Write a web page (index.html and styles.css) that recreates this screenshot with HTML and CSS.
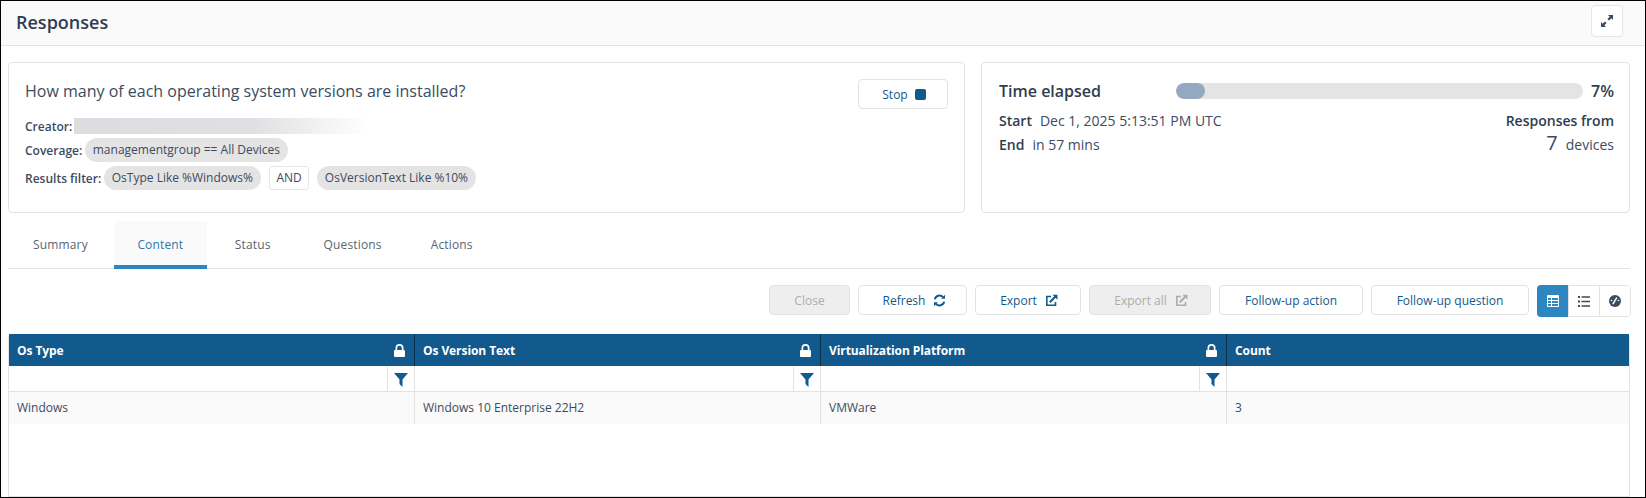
FILE: index.html
```html
<!DOCTYPE html>
<html lang="en">
<head>
<meta charset="utf-8">
<title>Responses</title>
<link rel="stylesheet" href="styles.css">
</head>
<body>
<div class="page">
  <header class="topbar">
    <h1 class="title">Responses</h1>
    <button class="icon-btn" aria-label="Expand">
      <svg width="12" height="12" viewBox="0 0 12 12" fill="#3d4b5f"><path d="M7 0h5v5l-1.700-1.700L8 5.600 6.400 4 8.700 1.700zM0 12V7l1.700 1.700L4 6.400 5.600 8 3.300 10.300 5 12z"/></svg>
    </button>
  </header>

  <section class="cards">
    <div class="card card-query">
      <div class="query-main">
        <div class="question">How many of each operating system versions are installed?</div>
        <div class="meta meta-creator"><span class="meta-label">Creator:</span><span class="redacted"></span></div>
        <div class="meta meta-coverage"><span class="meta-label">Coverage:</span><span class="chip">managementgroup == All Devices</span></div>
        <div class="meta"><span class="meta-label">Results filter:</span><span class="chip">OsType Like %Windows%</span><span class="op">AND</span><span class="chip">OsVersionText Like %10%</span></div>
      </div>
      <button class="btn btn-stop">Stop <span class="stop-square"></span></button>
    </div>
    <div class="card card-time">
      <div class="time-head">
        <span class="time-title">Time elapsed</span>
        <div class="bar"><div class="bar-fill"></div></div>
        <span class="pct">7%</span>
      </div>
      <div class="time-row">
        <div><b class="strong">Start</b>Dec 1, 2025 5:13:51 PM UTC</div>
        <div class="strong">Responses from</div>
      </div>
      <div class="time-row time-row-end">
        <div><b class="strong">End</b>in 57 mins</div>
        <div><span class="big-num">7</span>devices</div>
      </div>
    </div>
  </section>

  <nav class="tabs">
    <a class="tab tab-first">Summary</a>
    <a class="tab tab-active">Content</a>
    <a class="tab tab-status">Status</a>
    <a class="tab tab-questions">Questions</a>
    <a class="tab">Actions</a>
  </nav>

  <div class="toolbar">
    <button class="btn btn-disabled w-close">Close</button>
    <button class="btn w-refresh">Refresh
      <svg class="btn-icon" width="13" height="13" viewBox="0 0 13 13" fill="none" stroke="#12598d" stroke-width="2"><path d="M1.800 5.200A4.800 4.800 0 0 1 10 3.200"/><path d="M11.200 7.800A4.800 4.800 0 0 1 3 9.800"/><path d="M12 .8v4H8z" fill="#12598d" stroke="none"/><path d="M1 12.200v-4h4z" fill="#12598d" stroke="none"/></svg>
    </button>
    <button class="btn w-export">Export
      <svg class="btn-icon" width="13" height="13" viewBox="0 0 13 13" fill="none" stroke="#12598d" stroke-width="1.600"><path d="M6 2.500H1.800v8.700h8.700V8"/><path d="M4.800 8.200L10.500 2.500" stroke-width="2"/><path d="M7.500 .8h5v5z" fill="#12598d" stroke="none"/></svg>
    </button>
    <button class="btn btn-disabled w-exportall">Export all
      <svg class="btn-icon" width="13" height="13" viewBox="0 0 13 13" fill="none" stroke="#adadad" stroke-width="1.600"><path d="M6 2.500H1.800v8.700h8.700V8"/><path d="M4.800 8.200L10.500 2.500" stroke-width="2"/><path d="M7.500 .8h5v5z" fill="#adadad" stroke="none"/></svg>
    </button>
    <button class="btn w-action">Follow-up action</button>
    <button class="btn w-question">Follow-up question</button>
    <div class="view-group">
      <button class="view-btn view-active" aria-label="Table view">
        <svg width="12" height="12" viewBox="0 0 12 12" fill="#fff"><path fill-rule="evenodd" d="M.8 0h10.400a.8.800 0 0 1 .8.800v10.400a.8.800 0 0 1-.8.800H.8a.8.800 0 0 1-.8-.8V.8A.8.800 0 0 1 .8 0zM1 3v2h3V3zm4 0v2h6V3zM1 6v2h3V6zm4 0v2h6V6zM1 9v2h3V9zm4 0v2h6V9z"/></svg>
      </button>
      <button class="view-btn" aria-label="List view">
        <svg width="12" height="11" viewBox="0 0 12 11" fill="#3d4b5f"><path d="M0 0h2v2H0zM3.500 .2H12v1.600H3.500zM0 4.500h2v2H0zM3.500 4.700H12v1.600H3.500zM0 9h2v2H0zM3.500 9.200H12v1.600H3.500z"/></svg>
      </button>
      <button class="view-btn" aria-label="Dashboard view">
        <svg width="12" height="12" viewBox="0 0 12 12"><circle cx="6" cy="6" r="6" fill="#3d4b5f"/><path d="M3.800 9.200L7.800 2.600" stroke="#fff" stroke-width="1.500"/><circle cx="2.500" cy="5.500" r=".8" fill="#fff"/><circle cx="9.500" cy="5.500" r=".8" fill="#fff"/></svg>
      </button>
    </div>
  </div>

  <section class="grid-wrap">
    <div class="grid">
      <div class="th"><span>Os Type</span><svg class="lock" width="11" height="13" viewBox="0 0 11 13" fill="#fff"><path d="M1.500 6V4a4 4 0 0 1 8 0v2h.5a1 1 0 0 1 1 1v5a1 1 0 0 1-1 1H1a1 1 0 0 1-1-1V7a1 1 0 0 1 1-1zM3.200 6h4.600V4a2.300 2.300 0 0 0-4.600 0z"/></svg></div>
      <div class="th"><span>Os Version Text</span><svg class="lock" width="11" height="13" viewBox="0 0 11 13" fill="#fff"><path d="M1.500 6V4a4 4 0 0 1 8 0v2h.5a1 1 0 0 1 1 1v5a1 1 0 0 1-1 1H1a1 1 0 0 1-1-1V7a1 1 0 0 1 1-1zM3.200 6h4.600V4a2.300 2.300 0 0 0-4.600 0z"/></svg></div>
      <div class="th"><span>Virtualization Platform</span><svg class="lock" width="11" height="13" viewBox="0 0 11 13" fill="#fff"><path d="M1.500 6V4a4 4 0 0 1 8 0v2h.5a1 1 0 0 1 1 1v5a1 1 0 0 1-1 1H1a1 1 0 0 1-1-1V7a1 1 0 0 1 1-1zM3.200 6h4.600V4a2.300 2.300 0 0 0-4.600 0z"/></svg></div>
      <div class="th th-last"><span>Count</span></div>

      <div class="fc"><span class="fc-btn"><svg width="14" height="14" viewBox="0 0 14 14" fill="#12598d"><path d="M0 0h14L8.500 6.500V14L5.500 11V6.500z"/></svg></span></div>
      <div class="fc"><span class="fc-btn"><svg width="14" height="14" viewBox="0 0 14 14" fill="#12598d"><path d="M0 0h14L8.500 6.500V14L5.500 11V6.500z"/></svg></span></div>
      <div class="fc"><span class="fc-btn"><svg width="14" height="14" viewBox="0 0 14 14" fill="#12598d"><path d="M0 0h14L8.500 6.500V14L5.500 11V6.500z"/></svg></span></div>
      <div class="fc fc-last"></div>

      <div class="td">Windows</div>
      <div class="td">Windows 10 Enterprise 22H2</div>
      <div class="td">VMWare</div>
      <div class="td td-last">3</div>
    </div>
  </section>
</div>
</body>
</html>
```
FILE: styles.css
```css
* { box-sizing: border-box; }
html, body { margin: 0; padding: 0; background: #fff; }
body { font-family: "Open Sans", "Noto Sans", sans-serif; color: #3d4b5f; font-size: 12px; }
button { font-family: inherit; }

.page {
  width: 1646px; height: 498px; border: 1px solid #000; overflow: hidden;
  display: flex; flex-direction: column; background: #fff;
}

.topbar {
  height: 45px; flex: none; background: #fafafa; border-bottom: 1px solid #e3e3e3;
  display: flex; align-items: flex-start; justify-content: space-between;
  padding: 4px 22px 0 15px;
}
.title { margin: 4px 0 0; font-size: 18px; line-height: 26px; font-weight: 600; color: #2f3d50; }
.icon-btn {
  width: 32px; height: 32px; padding: 0; background: #fff; border: 1px solid #e6e6e6; border-radius: 4px;
  display: flex; align-items: center; justify-content: center;
}

.cards {
  display: flex; gap: 16px; padding: 16px 15px 0 7px; flex: none;
}
.card { height: 151px; background: #fff; border: 1px solid #e3e3e3; border-radius: 4px; }
.card-query { width: 957px; display: flex; justify-content: space-between; padding: 16px 16px 0 16px; }
.card-time { flex: 1; padding: 16px 15px 0 17px; }

.question { font-size: 16px; line-height: 24px; color: #3d4b5f; margin-bottom: 15px; }
.meta { display: flex; align-items: center; height: 24px; margin-bottom: 4px; }
.meta-creator { height: 16px; margin-bottom: 4px; }
.meta-label { font-weight: 600; font-size: 12px; margin-right: 3px; color: #3d4b5f; }
.redacted { width: 296px; height: 16px; margin-left: -1px; background: linear-gradient(90deg, #dcdde0 0%, #dfe0e3 60%, #fff 100%); }
.chip { height: 24px; line-height: 24px; padding: 0 8px 0 7.5px; background: #e4e4e4; border-radius: 12px; font-size: 12px; white-space: nowrap; }
.op { height: 24px; line-height: 22px; padding: 0 6.5px; margin: 0 8px; border: 1px solid #e6e6e6; border-radius: 3px; background: #fff; }

.btn {
  height: 30px; padding: 0; background: #fff; border: 1px solid #e3e3e3; border-radius: 4px;
  color: #12598d; font-size: 12px; display: inline-flex; align-items: center; justify-content: center; flex: none;
}
.btn-stop { width: 90px; padding-left: 2px; }
.stop-square { width: 11px; height: 11px; margin-left: 7px; background: #12598d; border-radius: 2px; }
.btn-icon { margin-left: 8px; }
.btn-disabled { background: #eee; color: #adadad; }

.time-head { display: flex; align-items: center; height: 24px; margin-bottom: 8px; }
.time-title { width: 177px; flex: none; font-size: 16px; font-weight: 600; color: #2f3d50; }
.bar { width: 407px; height: 16px; border-radius: 8px; background: #e4e4e4; overflow: hidden; flex: none; }
.bar-fill { width: 29px; height: 100%; background: #94a8c0; border-radius: 8px; }
.pct { margin-left: auto; font-size: 16px; font-weight: 600; color: #2f3d50; }
.time-row { display: flex; justify-content: space-between; align-items: baseline; line-height: 20px; margin-bottom: 2px; font-size: 14px; }
.strong { font-weight: 600; color: #2f3d50; }
b.strong { margin-right: 8px; }
.big-num { font-size: 20px; margin-right: 8px; }

.tabs {
  display: flex; flex: none; margin: 8px 15px 0 7px; height: 48px; gap: 3px;
  border-bottom: 1px solid #e3e3e3; padding-left: 1px;
}
.tab { padding: 0 24px; height: 48px; line-height: 47px; color: #5a6472; font-size: 12px; letter-spacing: .15px; }
.tab-first { margin-right: -1px; }
.tab-active { background: #fafafa; color: #2e78ad; border-bottom: 4px solid #2e86c1; margin-right: 1px; padding: 0 23.6px; }
.tab-status { margin-right: 2px; }
.tab-questions { margin-right: -2px; }

.toolbar {
  display: flex; flex: none; justify-content: flex-end; align-items: flex-start; gap: 8px;
  margin-top: 16px; padding-right: 14px; height: 49px;
}
.w-close { width: 81px; }
.w-refresh { width: 109px; padding-left: 4px; }
.w-export { width: 106px; padding-left: 2px; }
.w-exportall { width: 122px; padding-left: 2px; }
.w-action { width: 144px; }
.w-question { width: 158px; }
.view-group { display: flex; height: 32px; border: 1px solid #e3e3e3; border-radius: 4px; }
.view-btn { width: 31px; padding: 0; background: #fff; border: 0; border-left: 1px solid #e3e3e3; display: flex; align-items: center; justify-content: center; border-radius: 0 3px 3px 0; }
.view-btn:nth-child(2) { border-radius: 0; }
.view-btn:first-child { border-left: 0; }
.view-active { background: #2e86c1; width: 31px; margin: -1px 0 -1px -1px; border-radius: 4px 0 0 4px; }

.grid-wrap {
  flex: 1; margin: 0 15px 0 7px; border: 1px solid #e3e3e3; border-top: 0; border-radius: 4px 4px 0 0;
}
.grid { display: grid; grid-template-columns: 406px 406px 406px 1fr; grid-template-rows: 32px 26px 32px; }
.th {
  background: #12598d; color: #fff; font-weight: 700; font-size: 12px; letter-spacing: -.08px;
  display: flex; align-items: center; justify-content: space-between;
  padding: 0 9px 0 8px; border-right: 1px solid #0a2f4c;
}
.th-last { border-right: 0; }
.lock { flex: none; }
.fc { display: flex; justify-content: flex-end; border-right: 1px solid #e3e3e3; border-bottom: 1px solid #e3e3e3; }
.fc-last { border-right: 0; }
.fc-btn { width: 27px; border-left: 1px solid #e3e3e3; display: flex; align-items: center; justify-content: center; padding-top: 2px; }
.td { background: #fafafa; padding: 0 8px; line-height: 31px; border-right: 1px solid #e3e3e3; font-size: 12px; }
.td-last { border-right: 0; }
```
